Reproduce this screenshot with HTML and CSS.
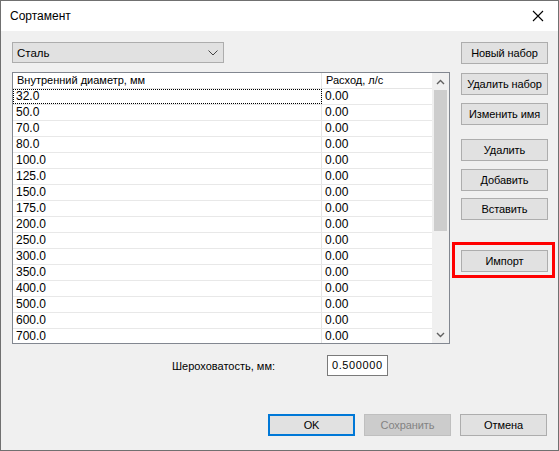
FILE: index.html
```html
<!DOCTYPE html>
<html lang="ru">
<head>
<meta charset="utf-8">
<title>Сортамент</title>
<link rel="stylesheet" href="styles.css">
</head>
<body>
<div class="window">
  <div class="titlebar">
    <span class="title">Сортамент</span>
    <svg class="close" width="12" height="12" viewBox="0 0 12 12"><path d="M1 1 L11 11 M11 1 L1 11" stroke="#000" stroke-width="1.1" fill="none"/></svg>
  </div>
  <div class="content">
    <div class="main">
      <div class="left">
        <div class="combo">
          <span>Сталь</span>
          <svg class="combo-arrow" width="10" height="6" viewBox="0 0 10 6"><path d="M0.5 0.5 L5 5 L9.5 0.5" stroke="#444" stroke-width="1" fill="none"/></svg>
        </div>
        <div class="list">
          <div class="grid">
            <div class="hdr">
              <div class="c1">Внутренний диаметр, мм</div>
              <div class="c2">Расход, л/с</div>
            </div>
            <div class="rows">
              <div class="row"><div class="c1 focus">32.0</div><div class="c2">0.00</div></div>
              <div class="row"><div class="c1">50.0</div><div class="c2">0.00</div></div>
              <div class="row"><div class="c1">70.0</div><div class="c2">0.00</div></div>
              <div class="row"><div class="c1">80.0</div><div class="c2">0.00</div></div>
              <div class="row"><div class="c1">100.0</div><div class="c2">0.00</div></div>
              <div class="row"><div class="c1">125.0</div><div class="c2">0.00</div></div>
              <div class="row"><div class="c1">150.0</div><div class="c2">0.00</div></div>
              <div class="row"><div class="c1">175.0</div><div class="c2">0.00</div></div>
              <div class="row"><div class="c1">200.0</div><div class="c2">0.00</div></div>
              <div class="row"><div class="c1">250.0</div><div class="c2">0.00</div></div>
              <div class="row"><div class="c1">300.0</div><div class="c2">0.00</div></div>
              <div class="row"><div class="c1">350.0</div><div class="c2">0.00</div></div>
              <div class="row"><div class="c1">400.0</div><div class="c2">0.00</div></div>
              <div class="row"><div class="c1">500.0</div><div class="c2">0.00</div></div>
              <div class="row"><div class="c1">600.0</div><div class="c2">0.00</div></div>
              <div class="row"><div class="c1">700.0</div><div class="c2">0.00</div></div>
            </div>
          </div>
          <div class="scrollbar">
            <div class="sb-btn"><svg width="9" height="6" viewBox="0 0 9 6"><path d="M1 5 L4.5 1.5 L8 5" stroke="#606060" stroke-width="1.4" fill="none"/></svg></div>
            <div class="sb-track"><div class="sb-thumb"></div></div>
            <div class="sb-btn"><svg width="9" height="6" viewBox="0 0 9 6"><path d="M1 1 L4.5 4.5 L8 1" stroke="#606060" stroke-width="1.4" fill="none"/></svg></div>
          </div>
        </div>
        <div class="rough">
          <span class="rough-label">Шероховатость, мм:</span>
          <div class="input">0.500000</div>
        </div>
      </div>
      <div class="right">
        <div class="btn">Новый набор</div>
        <div class="btn m9">Удалить набор</div>
        <div class="btn m8">Изменить имя</div>
        <div class="btn m14">Удалить</div>
        <div class="btn m8">Добавить</div>
        <div class="btn m7">Вставить</div>
        <div class="btn m30">Импорт</div>
      </div>
    </div>
    <div class="bottom">
      <div class="btn default">OK</div>
      <div class="btn disabled">Сохранить</div>
      <div class="btn">Отмена</div>
    </div>
  </div>
  <div class="highlight"></div>
</div>
</body>
</html>
```
FILE: styles.css
```css
* { box-sizing: border-box; }
html, body { margin: 0; padding: 0; }
body {
  background: #6e6e6e;
  font-family: "Liberation Sans", Arial, sans-serif;
  font-size: 11px;
  color: #000;
}
.window {
  position: relative;
  width: 559px;
  height: 451px;
  border: 1px solid #707070;
  background: #f0f0f0;
}
.titlebar {
  height: 30px;
  background: #fff;
  display: flex;
  align-items: center;
  padding-left: 9px;
  padding-right: 10px;
}
.title { font-size: 12px; flex: 1; padding-bottom: 1px; }
.close { display: block; margin-right: 4px; }
.content { padding: 11px 10px 0 11px; }
.main { display: flex; }
.left { width: 438px; }
.right { width: 87px; margin-left: 11px; display: flex; flex-direction: column; }
.combo {
  width: 212px;
  height: 21px;
  background: #e1e1e1;
  border: 1px solid #adadad;
  display: flex;
  align-items: center;
  padding: 0 5px 0 4px;
  font-size: 11.5px;
}
.combo span { flex: 1; }
.combo-arrow { display: block; }
.list {
  margin-top: 9px;
  height: 272px;
  border: 1px solid #828790;
  background: #fff;
  display: flex;
  overflow: hidden;
}
.grid { flex: 1; display: flex; flex-direction: column; overflow: hidden; }
.hdr, .row { display: flex; height: 16px; }
.hdr { border-bottom: 1px solid #e5e5e5; }
.row { border-bottom: 1px solid #e8e8e8; font-size: 12px; }
.c1 { width: 309px; border-right: 1px solid #e5e5e5; padding-left: 3px; line-height: 15px; white-space: nowrap; }
.c2 { flex: 1; padding-left: 3px; line-height: 15px; }
.hdr .c1 { padding-left: 4px; }
.hdr .c2 { padding-left: 4px; }
.focus { outline: 1px dotted #000; outline-offset: -1px; }
.rows { flex: 1; overflow: hidden; }
.scrollbar {
  width: 17px;
  background: #f0f0f0;
  display: flex;
  flex-direction: column;
}
.sb-btn { height: 17px; display: flex; align-items: center; justify-content: center; }
.sb-track { flex: 1; padding: 0 2px; }
.sb-thumb { height: 141px; background: #cdcdcd; }
.rough {
  margin-top: 11px;
  display: flex;
  align-items: center;
  padding-left: 160px;
}
.rough-label { width: 155px; }
.input {
  width: 61px;
  height: 21px;
  background: #fff;
  border: 1px solid #7a7a7a;
  padding-left: 4px;
  line-height: 19px;
  letter-spacing: 0.6px;
}
.btn {
  width: 87px;
  height: 22px;
  background: #e1e1e1;
  border: 1px solid #adadad;
  display: flex;
  align-items: center;
  justify-content: center;
  white-space: nowrap;
  letter-spacing: -0.1px;
}
.m7 { margin-top: 7px; }
.m8 { margin-top: 8px; }
.m9 { margin-top: 9px; }
.m14 { margin-top: 14px; }
.m30 { margin-top: 30px; }
.bottom {
  margin-top: 38px;
  display: flex;
  justify-content: flex-end;
  gap: 9px;
  padding-right: 1px;
}
.default { border: 2px solid #0078d7; }
.disabled { background: #cccccc; border-color: #bfbfbf; color: #838383; }
.highlight {
  position: absolute;
  left: 451px;
  top: 241px;
  width: 103px;
  height: 36px;
  border: 3px solid #ff0000;
}
```
